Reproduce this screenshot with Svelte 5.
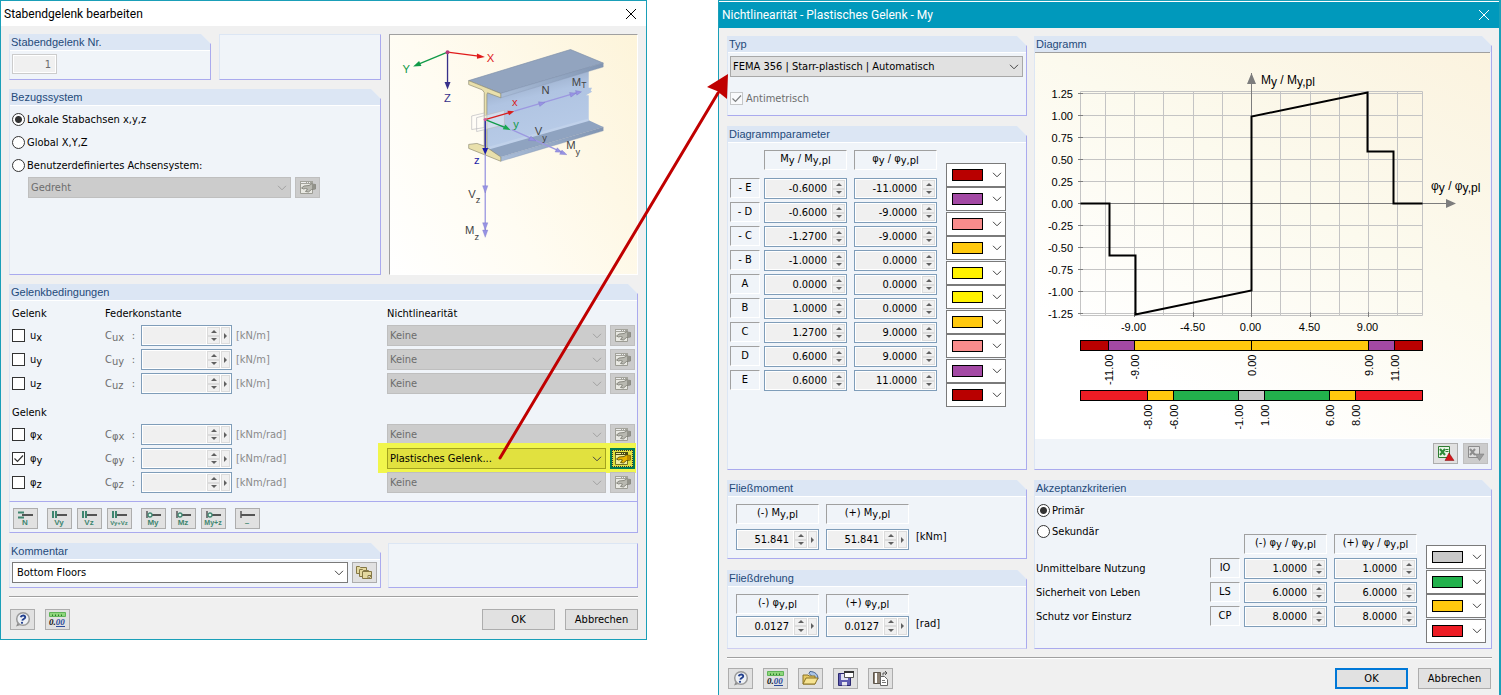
<script>
	let axes = $state("local")
	let criteria = $state("primary")
	let comment = $state("Bottom Floors")

	const springs = [
		{
			rows: [
				{ base: "u", axis: "x", unit: "[kN/m]" },
				{ base: "u", axis: "y", unit: "[kN/m]" },
				{ base: "u", axis: "z", unit: "[kN/m]" }
			]
		},
		{
			rows: [
				{ base: "φ", axis: "x", unit: "[kNm/rad]" },
				{ base: "φ", axis: "y", unit: "[kNm/rad]", on: true },
				{ base: "φ", axis: "z", unit: "[kNm/rad]" }
			]
		}
	]

	const presets = [["N"], ["Vy", "Vz", "Vy+Vz"], ["My", "Mz", "My+z"], ["–"]]

	const points = [
		["- E", "-0.6000", "-11.0000"],
		["- D", "-0.6000", "-9.0000"],
		["- C", "-1.2700", "-9.0000"],
		["- B", "-1.0000", "0.0000"],
		["A", "0.0000", "0.0000"],
		["B", "1.0000", "0.0000"],
		["C", "1.2700", "9.0000"],
		["D", "0.6000", "9.0000"],
		["E", "0.6000", "11.0000"]
	]
	const pointColors = ["#b90000", "#a349a4", "#f88c8c", "#ffc90e", "#fff200", "#fff200", "#ffc90e", "#f88c8c", "#a349a4", "#b90000"]

	const limits = [
		["Unmittelbare Nutzung", "IO", "1.0000"],
		["Sicherheit von Leben", "LS", "6.0000"],
		["Schutz vor Einsturz", "CP", "8.0000"]
	]
	const limitColors = ["#c8c8c8", "#22b14c", "#ffc90e", "#ed1c24"]

	// chart scales
	const px = v => 216.5 + Math.round(v * 13)
	const py = v => 150.5 - Math.round(v * 88)
	const xLines = [-11.25, -9, -6.75, -4.5, -2.25, 0, 2.25, 4.5, 6.75, 9, 11.25]
	const xTicks = [-9, -4.5, 0, 4.5, 9]
	const yTicks = [1.25, 1, 0.75, 0.5, 0.25, 0, -0.25, -0.5, -0.75, -1, -1.25]
	const curve = [[-13.15, 0], [-10.9, 0], [-10.9, -0.59], [-8.9, -0.59], [-8.9, -1.26], [0, -0.99], [0, 0.99], [8.9, 1.26], [8.9, 0.59], [10.9, 0.59], [10.9, 0], [13.15, 0]]
	const curvePoints = curve.map(([x, y]) => `${px(x)},${py(y)}`).join(" ")

	const bands = [
		{
			top: 287.5,
			stops: [-13.15, -11, -9, 0, 9, 11, 13.15],
			colors: ["#b90000", "#a349a4", "#ffc90e", "#ffc90e", "#a349a4", "#b90000"]
		},
		{
			top: 337.5,
			stops: [-13.15, -8, -6, -1, 1, 6, 8, 13.15],
			colors: ["#ed1c24", "#ffc90e", "#22b14c", "#c8c8c8", "#22b14c", "#ffc90e", "#ed1c24"]
		}
	]
</script>

{#snippet spin(value, label, more)}
	<span class="spin">
		<input type="text" {value} aria-label={label} readonly />
		<span class="arrows">
			<button type="button" aria-label="mehr"><svg width="6" height="3" viewBox="0 0 6 3"><path d="M3 0 6 3H0z" /></svg></button>
			<button type="button" aria-label="weniger"><svg width="6" height="3" viewBox="0 0 6 3"><path d="M0 0H6L3 3z" /></svg></button>
		</span>
		{#if more}
			<button type="button" class="more" aria-label="Auswahl"><svg width="3" height="6" viewBox="0 0 3 6"><path d="M0 0 3 3 0 6z" /></svg></button>
		{/if}
	</span>
{/snippet}

{#snippet colorSelect(color)}
	<span class="color">
		<select aria-label="Farbe"><option value={color}></option></select>
		<span class="swatch" style="background: {color}"></span>
	</span>
{/snippet}

{#snippet editIcon(active)}
	<svg class="icon" viewBox="0 0 17 15">
		<path d="M1.500 1.500h12v12h-12z" fill={active ? "#f3ee9c" : "#e9e9e3"} stroke={active ? "#77751f" : "#9c9c94"} />
		<path d="M1 1h13v3H1z" fill={active ? "#4b4a15" : "#a3a39b"} />
		<path d="M2 2.500h5m1 0h1m1 0h1" stroke={active ? "#f3ee9c" : "#eee"} />
		<path d="M2.500 8 5 6l5-.5 2.500-1.500 4 .500v4.500l-4 .500-3 2.500-3-.5 2-2.500-2-.5-2 .5z" fill={active ? "#e8b400" : "#b9b9b1"} stroke={active ? "#4a4200" : "#77776f"} stroke-width=".8" />
		<path d="M13 4.500h3.500v4.500H13z" fill={active ? "#b98a00" : "#93938b"} />
	</svg>
{/snippet}

{#snippet helpIcon()}
	<svg class="icon" viewBox="0 0 17 15">
		<path d="M4 10 2 14.500 8 12.500z" fill="#8c8c8c" />
		<circle cx="9" cy="7" r="6.300" fill="#eef1f6" stroke="#9a9a9a" stroke-width="1.500" />
		<path d="M6.700 5.200C7.200 3 11.500 2.800 11.200 5.300 11 7 8.600 7 8.300 8.600" fill="none" stroke="#23408e" stroke-width="1.900" />
		<circle cx="8" cy="10.800" r="1.100" fill="#23408e" />
	</svg>
{/snippet}

{#snippet unitsIcon()}
	<svg class="icon" viewBox="0 0 17 15">
		<path d="M.5.500h16v4H.5z" fill="#8ed67c" stroke="#5fb457" />
		<path d="M3.500 4V2.500m3 1.500V2.500m3 1.500V2.500m3 1.500V2.500" stroke="#2b7b28" />
		<text x="0" y="13" font-size="9" font-weight="bold" font-style="italic" font-family="Liberation Serif" fill="#111">0.<tspan fill="#2a4a9a">00</tspan></text>
		<path d="M7 14.500h9" stroke="#2a4a9a" />
	</svg>
{/snippet}

{#snippet presetIcon(name)}
	<svg class="icon" viewBox="0 0 17 15">
		{#if name === "N"}
			<path d="M1 1.500h6M1 6.500h6" stroke="#3f8670" stroke-width="2" />
			<path d="M5 4h11" stroke="#555" stroke-width="2" />
		{:else if name.startsWith("V")}
			<path d="M2 0v7M5 0v7" stroke="#3f8670" stroke-width="2" />
			<path d="M6 4h10" stroke="#555" stroke-width="2" />
		{:else if name.startsWith("M")}
			<path d="M2 0v7" stroke="#555" stroke-width="1.500" />
			<path d="M7 4h9" stroke="#555" stroke-width="2" />
			<circle cx="5" cy="4" r="2" fill="#dff2ea" stroke="#3f8670" stroke-width="1.300" />
		{:else}
			<path d="M2 0v7" stroke="#555" stroke-width="1.500" />
			<path d="M2 4h14" stroke="#555" stroke-width="2" />
		{/if}
		<text x="8" y="14" text-anchor="middle" font-size={name.length > 4 ? 6 : name.length > 2 ? 7 : 8} font-weight="bold" font-family="Liberation Sans" fill="#3f8670">{name}</text>
	</svg>
{/snippet}

{#snippet sheetsIcon()}
	<svg class="icon" viewBox="0 0 17 15" stroke="#857845" fill="#e4d9a0">
		<path d="M.5 1.500h3l1 1h6v6H.5z" />
		<path d="M3.500 4.500h3l1 1h5v6h-9z" />
		<path d="M6.500 6.500h9v7h-9z" />
		<path d="M12 13.500v-3h3.500z" fill="#fff" />
	</svg>
{/snippet}

<div class="page">
	<form class="dialog hinge">
		<header>
			<h1>Stabendgelenk bearbeiten</h1>
			<button type="button" class="close" aria-label="Schließen">
				<svg width="10" height="10" viewBox="0 0 10 10"><path d="M0 0 10 10M10 0 0 10" /></svg>
			</button>
		</header>

		<div class="content">
			<div class="upper">
				<section class="panel number">
					<h2><label for="hinge-no">Stabendgelenk Nr.</label></h2>
					<input id="hinge-no" type="text" value="1" disabled />
				</section>
				<section class="panel blank"></section>
				<section class="panel system">
					<h2>Bezugssystem</h2>
					<label class="choice"><input type="radio" bind:group={axes} value="local" />Lokale Stabachsen x,y,z</label>
					<label class="choice"><input type="radio" bind:group={axes} value="global" />Global X,Y,Z</label>
					<label class="choice"><input type="radio" bind:group={axes} value="user" />Benutzerdefiniertes Achsensystem:</label>
					<div class="rotated">
						<select class="off" aria-label="Achsensystem" disabled><option>Gedreht</option></select>
						<button type="button" class="tool" aria-label="Bearbeiten" disabled>{@render editIcon()}</button>
					</div>
				</section>
				<figure>
					<svg viewBox="27 15 747 717" role="img" aria-label="Stabachsen und Schnittgrößen">
						<defs>
							<linearGradient id="web" x1="0" y1="0" x2=".3" y2="1">
								<stop offset="0" stop-color="#8496b1" />
								<stop offset=".45" stop-color="#b0c4e2" />
								<stop offset="1" stop-color="#b9cce8" />
							</linearGradient>
							<linearGradient id="side" x1="0" y1="0" x2="1" y2="0">
								<stop offset="0" stop-color="#aabdd8" />
								<stop offset="1" stop-color="#8195b2" />
							</linearGradient>
						</defs>
						<path d="M318 182 628 108V172H638L634 180 638 184 620 194H628V272L318 360z" fill="url(#web)" />
						<path d="M318 358 628 270 672 290 362 381z" fill="#8fa3c0" />
						<path d="M318 352 628 265V272L318 361z" fill="#c0d1ea" />
						<path d="M362 381 672 290V302L362 394z" fill="url(#side)" stroke="#8395ae" />
						<path d="M265 150 573 56 672 97 362 189z" fill="#92a4bf" stroke="#7f90a9" stroke-width="2" />
						<path d="M362 189 672 97V109L362 202z" fill="url(#side)" stroke="#8395ae" />
						<path d="M265 150 362 189V202L322 187 320 192V352L362 381V394L265 355V343L290 340 312 348V186L306 178 265 162z" fill="#e9e0ac" stroke="#8b8870" stroke-width="2" />
						<path d="M274 257 312 248V292L274 298zM289 262 373 240V284L289 304z" fill="#fff" fill-opacity=".4" stroke="#b9b9bd" stroke-width="2" />

						<g stroke-width="4">
							<path d="M201 64 295 76" stroke="#e01a1a" /><path d="M314 79 290 68V84z" fill="#e01a1a" />
							<path d="M201 64 117 99" stroke="#109a48" /><path d="M97 107 115 91 122 106z" fill="#109a48" />
							<path d="M201 64V158" stroke="#37308a" /><path d="M201 177 192 154H210z" fill="#37308a" />
							<circle cx="201" cy="64" r="6" fill="#b23a7a" />
							<path d="M403 242 600 184M395 298 555 370M315 372V615" stroke="#9c98e0" />
							<path d="M315 268 388 247" stroke="#d81e1e" /><path d="M403 243 382 241 387 255z" fill="#d81e1e" />
							<path d="M315 268 378 293" stroke="#109a48" /><path d="M392 300 368 297 376 283z" fill="#18a850" />
							<path d="M315 268V358" stroke="#1c1ca8" /><path d="M315 374 306 354H324z" fill="#1c1ca8" />
							<circle cx="315" cy="268" r="5" fill="#d0589c" />
						</g>
						<g fill="#9793e4" stroke="#7773c2">
							<path d="M496 216 476 214 480 228zM590 188 570 186 574 200zM606 184 588 180 592 194z" />
							<path d="M468 332 446 331 453 318zM546 367 526 366 533 353zM562 374 540 373 547 360z" />
							<path d="M315 490 307 468H323zM315 602 307 580H323zM315 624 307 602H323z" />
						</g>

						<g font-size="34">
							<text x="320" y="95" fill="#e01a1a">X</text>
							<text x="65" y="127" fill="#109a48">Y</text>
							<text x="190" y="216" fill="#37308a">Z</text>
							<g fill="#444">
								<text x="485" y="192">N</text>
								<text x="577" y="166">M<tspan font-size="26" dy="6">T</tspan></text>
								<text x="465" y="315">V<tspan font-size="28" dy="18">y</tspan></text>
								<text x="560" y="356">M<tspan font-size="28" dy="18">y</tspan></text>
								<text x="264" y="504">V<tspan font-size="28" dy="16">z</tspan></text>
								<text x="254" y="614">M<tspan font-size="28" dy="18">z</tspan></text>
							</g>
							<text x="396" y="226" fill="#d81e1e">x</text>
							<text x="400" y="292" fill="#109a48">y</text>
							<text x="281" y="403" fill="#1c1ca8">z</text>
						</g>
					</svg>
				</figure>
			</div>

			<section class="panel springs">
				<h2>Gelenkbedingungen</h2>
				{#each springs as group, g}
					<div class="row caption" class:second={g > 0}>
						<span>Gelenk</span>
						{#if g === 0}
							<span class="wide">Federkonstante</span>
							<span class="nonlin">Nichtlinearität</span>
						{/if}
					</div>
					{#each group.rows as r}
						<div class="row">
							<label class="tick"><input type="checkbox" checked={r.on} /><span>{r.base}<sub>{r.axis}</sub></span></label>
							<span class="const"><span>C<sub>{r.base}{r.axis}</sub></span><span>:</span></span>
							{@render spin("", `C ${r.base}${r.axis}`, true)}
							<span class="unit">{r.unit}</span>
							<div class="law" class:marked={r.on}>
								<select class:off={!r.on} disabled={!r.on} aria-label="Nichtlinearität {r.base}{r.axis}">
									<option>{r.on ? "Plastisches Gelenk..." : "Keine"}</option>
								</select>
								<button type="button" class="tool" aria-label="Bearbeiten" disabled={!r.on}>{@render editIcon(r.on)}</button>
							</div>
						</div>
					{/each}
				{/each}
			</section>
			<div class="panel presets">
				{#each presets as group}
					<div>
						{#each group as name}
							<button type="button" class="tool" aria-label={name}>{@render presetIcon(name)}</button>
						{/each}
					</div>
				{/each}
			</div>

			<div class="lower">
				<section class="panel comment">
					<h2><label for="comment">Kommentar</label></h2>
					<div>
						<select id="comment" class="white" bind:value={comment}><option>Bottom Floors</option></select>
						<button type="button" class="tool" aria-label="Kommentare">{@render sheetsIcon()}</button>
					</div>
				</section>
				<section class="panel blank"></section>
			</div>

			<footer>
				<button type="button" class="tool" aria-label="Hilfe">{@render helpIcon()}</button>
				<button type="button" class="tool" aria-label="Einheiten">{@render unitsIcon()}</button>
				<button type="button" class="push first">OK</button>
				<button type="button" class="push">Abbrechen</button>
			</footer>
		</div>
	</form>

	<form class="dialog nonlinear">
		<header>
			<h1>Nichtlinearität - Plastisches Gelenk - My</h1>
			<button type="button" class="close" aria-label="Schließen">
				<svg width="10" height="10" viewBox="0 0 10 10"><path d="M0 0 10 10M10 0 0 10" /></svg>
			</button>
		</header>

		<div class="content">
			<div class="columns">
				<div class="stack">
					<section class="panel type">
						<h2><label for="type">Typ</label></h2>
						<select id="type"><option>FEMA 356 | Starr-plastisch | Automatisch</option></select>
						<label class="tick"><input type="checkbox" checked disabled />Antimetrisch</label>
					</section>

					<section class="panel params">
						<h2>Diagrammparameter</h2>
						<div class="fields">
							<table>
								<thead>
									<tr>
										<td></td>
										<th><span class="sunken">M<sub>y</sub> / M<sub>y,pl</sub></span></th>
										<th><span class="sunken">φ<sub>y</sub> / φ<sub>y,pl</sub></span></th>
									</tr>
								</thead>
								<tbody>
									{#each points as [name, m, phi]}
										<tr>
											<th class="code"><span class="sunken name">{name}</span></th>
											<td>{@render spin(m, `M ${name}`)}</td>
											<td>{@render spin(phi, `φ ${name}`)}</td>
										</tr>
									{/each}
								</tbody>
							</table>
							<div class="colors">
								{#each pointColors as color}
									{@render colorSelect(color)}
								{/each}
							</div>
						</div>
					</section>
				</div>

				<section class="panel diagram">
					<h2>Diagramm</h2>
					<div class="chart">
						<svg viewBox="0 0 455 385" role="img" aria-label="Diagramm">
							<g stroke="#c4c4c4" fill="none">
								<path d="M45.500 38.500H387.500V262.500H45.500z" />
								{#each xLines as v}
									<path d="M{px(v)} 38V262" />
								{/each}
								{#each yTicks as v}
									<path d="M45 {py(v)}H387" />
								{/each}
							</g>
							<g stroke="#7d7d7d">
								{#each yTicks as v}
									<path d="M43 {py(v)}H48" />
								{/each}
								{#each xTicks as v}
									<path d="M{px(v)} 259V264" />
								{/each}
								<path d="M216.500 20V262M45 150.500H412" />
							</g>
							<path d="M216.500 20 221 31H212zM421 150.500 411 146V155z" fill="#7d7d7d" />
							<polyline points={curvePoints} fill="none" stroke="#000" stroke-width="2" />

							<g text-anchor="end">
								{#each yTicks as v}
									<text x="38" y={py(v) + 4}>{v.toFixed(2)}</text>
								{/each}
							</g>
							<g text-anchor="middle">
								{#each xTicks as v}
									<text x={px(v) - 1} y="278">{v.toFixed(2)}</text>
								{/each}
							</g>
							<text class="axis" x="226" y="31">M<tspan dy="2">y</tspan> <tspan dy="-2">/ M</tspan><tspan dy="2">y,pl</tspan></text>
							<text class="axis" x="396" y="137">φ<tspan dy="2">y</tspan> <tspan dy="-2">/ φ</tspan><tspan dy="2">y,pl</tspan></text>

							{#each bands as band}
								{#each band.colors as color, i}
									<rect x={px(band.stops[i])} y={band.top} width={px(band.stops[i + 1]) - px(band.stops[i])} height="10" fill={color} stroke="#000" />
								{/each}
								{#each band.stops.slice(1, -1) as v}
									<text text-anchor="end" transform="translate({px(v) + 4} {band.top + 14}) rotate(-90)">{v.toFixed(2)}</text>
								{/each}
							{/each}
						</svg>
					</div>
					<div class="export">
						<button type="button" class="tool" aria-label="Excel-Export">
							<svg class="icon" viewBox="0 0 17 15">
								<path d="M1.500.500h11v11h-11z" fill="#e9f5e5" stroke="#2e7d32" />
								<path d="M3 3l5 6M8 3l-5 6" stroke="#2e8b3a" stroke-width="2" />
								<path d="M8.500 3.500h3m-3 2h3" stroke="#2e7d32" />
								<path d="M12 7 17 14.500H8z" fill="#d5151b" stroke="#7d0b0f" stroke-width=".5" />
							</svg>
						</button>
						<button type="button" class="tool" aria-label="Excel-Import" disabled>
							<svg class="icon" viewBox="0 0 17 15">
								<path d="M1.500.500h11v11h-11z" fill="#dedede" stroke="#8d8d8d" />
								<path d="M3 3l5 6M8 3l-5 6" stroke="#8d8d8d" stroke-width="2" />
								<path d="M8 8h9l-4.500 6.500z" fill="#9c9c9c" stroke="#777" stroke-width=".5" />
							</svg>
						</button>
					</div>
				</section>

				<div class="stack">
					<section class="panel yield">
						<h2>Fließmoment</h2>
						<div class="pair">
							<span class="sunken">(-) M<sub>y,pl</sub></span>
							<span class="sunken">(+) M<sub>y,pl</sub></span>
							<span></span>
							{@render spin("51.841", "(-) My,pl", true)}
							{@render spin("51.841", "(+) My,pl", true)}
							<span>[kNm]</span>
						</div>
					</section>
					<section class="panel yield">
						<h2>Fließdrehung</h2>
						<div class="pair tight">
							<span class="sunken">(-) φ<sub>y,pl</sub></span>
							<span class="sunken">(+) φ<sub>y,pl</sub></span>
							<span></span>
							{@render spin("0.0127", "(-) φy,pl", true)}
							{@render spin("0.0127", "(+) φy,pl", true)}
							<span>[rad]</span>
						</div>
					</section>
				</div>

				<section class="panel acceptance">
					<h2>Akzeptanzkriterien</h2>
					<label class="choice"><input type="radio" bind:group={criteria} value="primary" />Primär</label>
					<label class="choice"><input type="radio" bind:group={criteria} value="secondary" />Sekundär</label>
					<div class="fields">
						<table>
							<thead>
								<tr>
									<td></td>
									<td></td>
									<th><span class="sunken">(-) φ<sub>y</sub> / φ<sub>y,pl</sub></span></th>
									<th><span class="sunken">(+) φ<sub>y</sub> / φ<sub>y,pl</sub></span></th>
								</tr>
							</thead>
							<tbody>
								{#each limits as [title, code, value]}
									<tr>
										<th class="title">{title}</th>
										<td class="code"><span class="sunken name">{code}</span></td>
										<td>{@render spin(value, `${code} (-)`)}</td>
										<td>{@render spin(value, `${code} (+)`)}</td>
									</tr>
								{/each}
							</tbody>
						</table>
						<div class="colors">
							{#each limitColors as color}
								{@render colorSelect(color)}
							{/each}
						</div>
					</div>
				</section>
			</div>

			<footer>
				<button type="button" class="tool" aria-label="Hilfe">{@render helpIcon()}</button>
				<button type="button" class="tool" aria-label="Einheiten">{@render unitsIcon()}</button>
				<button type="button" class="tool" aria-label="Öffnen">
					<svg class="icon" viewBox="0 0 17 15">
						<path d="M8 .5c5 0 8 3 8 7l-2 2-7-7z" fill="#a9c3e6" stroke="#27477c" stroke-width=".8" />
						<path d="M1 4h5l1 1h6v8H1z" fill="#e6c964" stroke="#8c7426" />
						<path d="M1 13 4 7h12l-3 6z" fill="#f6e391" stroke="#8c7426" />
					</svg>
				</button>
				<button type="button" class="tool" aria-label="Speichern">
					<svg class="icon" viewBox="0 0 17 15">
						<path d="M1.500 2.500h12v12h-12z" fill="#5f5cb0" stroke="#2b2870" />
						<path d="M4 3h7v6H4z" fill="#dfe0f2" />
						<path d="M5 11h5v3.500H5z" fill="#e8e8ee" />
						<path d="M7.500.500h9v6h-9z" fill="#fff" stroke="#555" />
						<path d="M7 1h10" stroke="#333" stroke-width="2" />
					</svg>
				</button>
				<button type="button" class="tool" aria-label="Kopieren">
					<svg class="icon" viewBox="0 0 17 15">
						<path d="M1.500 1.500h7v11h-7z" fill="#8b8072" stroke="#5e574d" />
						<path d="M4 2v10" stroke="#fff" stroke-width="2" />
						<path d="M11 4.500V2h4M13 0l2 2-2 2" fill="none" stroke="#555" />
						<path d="M8.500 5.500h4l3 3v6h-7z" fill="#fff" stroke="#666" />
						<path d="M10 9.500h3m-3 2h4" stroke="#777" />
					</svg>
				</button>
				<button type="button" class="push first default">OK</button>
				<button type="button" class="push">Abbrechen</button>
			</footer>
		</div>
	</form>

	<svg class="pointer" width="234" height="392" viewBox="0 0 234 392">
		<path d="M4 386 222 21" stroke="#c00000" stroke-width="3" stroke-linecap="round" />
		<path d="M232 2 211 15 221 19 231 27z" fill="#c00000" />
	</svg>
</div>

<style>
:global(body) {
	margin: 0;
	background: #fff;
	overflow: hidden;
}
.page {
	position: relative;
	display: grid;
	grid-template-columns: 647fr 783fr;
	gap: 71px;
	align-items: start;
	min-height: 100vh;
	font: 11px/15px "DejaVu Sans Condensed", "Noto Sans", sans-serif;
	color: #000;
}
.page * {
	box-sizing: border-box;
}
input, select, button {
	margin: 0;
	font: inherit;
	color: inherit;
}
sub {
	font-size: 11px;
	line-height: 0;
	vertical-align: -2px;
}
h1, h2 {
	margin: 0;
	font-weight: normal;
}

.dialog {
	border: 1px solid #1a9fb8;
	background: #f0f0f0;
}
.nonlinear {
	min-height: 100vh;
	border-right-width: 2px;
	border-bottom: 0;
}
.dialog > header {
	display: flex;
	align-items: center;
	justify-content: space-between;
	height: 25px;
	padding: 0 10px 0 3px;
	background: #fff;
}
.nonlinear > header {
	height: 27px;
	border-top: 1px solid #fff;
	background: #0099bc;
	color: #fff;
}
h1 {
	font: 12px/16px Roboto, "Open Sans", sans-serif;
}
.close {
	display: flex;
	padding: 0;
	border: 0;
	background: none;
}
.close path {
	stroke: currentColor;
}
.content {
	padding: 8px;
}
.nonlinear .content {
	padding-right: 7px;
}

.panel {
	border: solid #aaaaee;
	border-width: 0 1px 1px 0;
	border-left: 1px solid #dce6f4;
	background: #f0f4f9;
	clip-path: polygon(0 0, calc(100% - 10px) 0, 100% 10px, 100% 100%, 0 100%);
}
.panel.blank {
	border-top: 1px solid #dce6f4;
	clip-path: none;
}
h2 {
	height: 17px;
	padding-left: 1px;
	border-bottom: 1px solid #fff;
	background: #dce6f4;
	color: #1f4a7a;
	font: 11px/16px "Liberation Sans", sans-serif;
}

.upper {
	display: grid;
	grid-template-columns: 202px 162px 1fr;
	grid-template-rows: 46px 186px;
	gap: 9px 8px;
}
.system {
	grid-column: span 2;
}
figure {
	grid-column: 3;
	grid-row: 1 / 3;
	margin: 0;
	border: 1px solid #a0a0a0;
	border-right-color: #fff;
	border-bottom-color: #fff;
	background: linear-gradient(60deg, #fff, #fffcf2 40%, #fdf4da);
}
figure svg {
	display: block;
	width: 100%;
	height: 100%;
	font-family: "Liberation Sans", sans-serif;
}
.number input {
	width: 45px;
	height: 20px;
	margin: 3px 2px;
	padding: 0 5px;
	border: 1px solid #ccc;
	box-shadow: inset 0 0 0 1px #fff;
	background: #f0f0f0;
	color: #6d6d6d;
	text-align: right;
}
.choice {
	display: flex;
	align-items: center;
	gap: 2px;
	height: 15px;
	margin: 0 0 8px 2px;
}
.system h2, .acceptance h2 {
	margin-bottom: 6px;
}
input[type="radio"], input[type="checkbox"] {
	appearance: none;
	width: 13px;
	height: 13px;
	border: 1px solid #333;
	background: #fff;
}
input[type="radio"] {
	border-radius: 50%;
}
input[type="radio"]:checked {
	background: radial-gradient(circle, #333 3px, #fff 4px);
}
input[type="checkbox"]:checked {
	background: #fff url("data:image/svg+xml,%3Csvg xmlns='http://www.w3.org/2000/svg' width='11' height='11'%3E%3Cpath d='M1.500 5.500 4.500 8.500 10 2.500' fill='none' stroke='%23333' stroke-width='1.200'/%3E%3C/svg%3E");
}
input[type="checkbox"]:disabled {
	border-color: #aaa;
	opacity: .6;
}

select {
	appearance: none;
	width: 100%;
	height: 21px;
	padding: 0 20px 0 2px;
	border: 1px solid #a8a8a8;
	border-radius: 0;
	background: #e1e1e1 url("data:image/svg+xml,%3Csvg xmlns='http://www.w3.org/2000/svg' width='10' height='6'%3E%3Cpath d='M1 .8 5 4.800 9 .8' fill='none' stroke='%23444'/%3E%3C/svg%3E") no-repeat right 3px center;
}
select.off {
	border-color: #bfbfbf;
	background-color: #ccc;
	background-image: url("data:image/svg+xml,%3Csvg xmlns='http://www.w3.org/2000/svg' width='10' height='6'%3E%3Cpath d='M1 .8 5 4.800 9 .8' fill='none' stroke='%23a0a0a0'/%3E%3C/svg%3E");
	color: #6d6d6d;
	opacity: 1;
}
select.white {
	padding-left: 4px;
	border-color: #7a7a7a;
	background-color: #fff;
}
.tool {
	display: flex;
	flex: none;
	align-items: center;
	justify-content: center;
	width: 25px;
	height: 21px;
	padding: 0;
	border: 1px solid #adadad;
	background: #e1e1e1;
}
.tool:disabled {
	border-color: #bfbfbf;
	background: #ccc;
}
.icon {
	flex: none;
	width: 17px;
	height: 15px;
	overflow: visible;
}
.rotated {
	display: grid;
	grid-template-columns: 263px 25px;
	gap: 4px;
	margin: -4px 0 0 18px;
}

.springs {
	height: 218px;
	margin-top: 9px;
}
.row {
	display: grid;
	grid-template-columns: 93px 36px 91px 155px 1fr;
	align-items: center;
	height: 21px;
	margin: 0 2px 3px 2px;
}
.caption {
	height: 24px;
	margin-bottom: 0;
}
.second {
	height: 27px;
	padding-top: 4px;
}
.wide {
	grid-column: 2 / 5;
}
.tick {
	display: flex;
	align-items: center;
	gap: 5px;
}
.const {
	display: flex;
	justify-content: space-between;
	padding-right: 6px;
	color: #6d6d6d;
}
.unit {
	padding-left: 4px;
	color: #8a8a8a;
}
.law {
	display: flex;
	gap: 4px;
}
.law.marked {
	margin: -5px -1px -4px -9px;
	padding: 5px 1px 4px 9px;
	background: #f1f64c;
}
.marked select {
	border-color: #a3a31e;
	background-color: #e1e13f;
}
.marked .tool {
	border: 2px solid #007a55;
	outline: 1px dotted #333;
	outline-offset: -3px;
	background: #e1e13f;
}

.spin {
	display: flex;
	gap: 1px;
	height: 21px;
	padding: 1px;
	border: 1px solid #7f9db9;
	background: #fff;
}
.spin input {
	flex: 1;
	min-width: 0;
	padding: 0 4px 0 0;
	border: 0;
	background: #f0f0f0;
	text-align: right;
}
.arrows {
	display: grid;
	grid-template-rows: 1fr 1fr;
	width: 13px;
}
.spin button {
	display: flex;
	align-items: center;
	justify-content: center;
	min-height: 0;
	padding: 0;
	border: 1px solid #dcdcdc;
	background: #f0f0f0;
}
.spin .more {
	width: 9px;
}
.spin svg {
	fill: #606060;
}

.presets {
	display: flex;
	gap: 9px;
	height: 31px;
	padding: 6px 3px;
	clip-path: none;
}
.presets div {
	display: flex;
	gap: 5px;
}
.lower {
	display: grid;
	grid-template-columns: 372px 1fr;
	gap: 7px;
	height: 45px;
	margin-top: 10px;
}
.comment div {
	display: flex;
	gap: 4px;
	padding: 2px 3px 0 2px;
}
footer {
	display: flex;
	gap: 10px;
	margin-top: 8px;
	padding: 12px 0 1px 1px;
	border-top: 1px solid #a0a0a0;
	box-shadow: inset 0 1px #fff;
}
.nonlinear footer {
	padding: 10px 1px 1px;
}
.push {
	width: 73px;
	height: 21px;
	padding: 0;
	border: 1px solid #adadad;
	background: #e1e1e1;
}
.push.first {
	margin-left: auto;
}
.push.default {
	border: 2px solid #0078d7;
}

.columns {
	display: grid;
	grid-template-columns: 300px 1fr;
	gap: 10px 7px;
}
.stack {
	display: grid;
	gap: 10px;
}
.type {
	height: 80px;
}
.type select {
	width: 293px;
	margin: 3px 2px 14px;
}
.type .tick {
	gap: 3px;
	margin-left: 2px;
	color: #6d6d6d;
}
.params {
	height: 344px;
}
.fields {
	display: flex;
	justify-content: space-between;
	align-items: flex-start;
}
table {
	border-collapse: collapse;
}
th, td {
	padding: 0 7px 3px 0;
	font-weight: normal;
	vertical-align: top;
}
.code {
	padding-right: 4px;
}
.sunken {
	display: block;
	width: 83px;
	height: 20px;
	border: 1px solid #fff;
	border-top-color: #a0a0a0;
	border-left-color: #a0a0a0;
	text-align: center;
	white-space: nowrap;
}
.sunken.name {
	width: 30px;
	line-height: 18px;
}
td .spin {
	width: 83px;
}
thead th {
	padding-bottom: 8px;
}
.params .fields {
	padding: 7px 20px 0 2px;
}
.colors {
	display: grid;
	flex: none;
	grid-auto-rows: 24px 25px;
	width: 60px;
	padding-top: 13px;
}
.color {
	position: relative;
	height: 24px;
}
.color select {
	height: 24px;
	border-color: #7a7a7a;
	background-color: #fff;
}
.swatch {
	position: absolute;
	top: 6px;
	left: 6px;
	width: 31px;
	height: 12px;
	border: 1px solid #000;
	pointer-events: none;
}

.diagram {
	display: flex;
	flex-direction: column;
}
.chart {
	margin-right: 1px;
	border: solid #a0a0a0;
	border-width: 1px 0 0;
	border-bottom: 1px solid #fff;
	background: linear-gradient(30deg, #fff 20%, #fcfaee 60%, #fbf3df);
}
.diagram h2 {
	height: 16px;
	border: 0;
}
.chart svg {
	display: block;
	width: 100%;
	font: 11px "Liberation Sans", sans-serif;
}
.axis {
	font-size: 12px;
}
.export {
	display: flex;
	justify-content: flex-end;
	gap: 5px;
	padding: 4px 3px 0 0;
}

.yield {
	height: 79px;
}
.pair {
	display: grid;
	grid-template-columns: 83px 83px auto;
	gap: 5px 7px;
	padding: 7px 8px;
}
.tight {
	row-gap: 2px;
}
.acceptance {
	height: 169px;
}
.acceptance .choice {
	margin-bottom: 6px;
}
.acceptance .fields {
	gap: 2px;
	margin-top: -11px;
	padding: 0 5px 0 1px;
}
.acceptance table {
	flex: 1;
}
.acceptance thead th {
	padding-bottom: 4px;
}
.acceptance .title {
	width: 100%;
	text-align: left;
	vertical-align: middle;
}
.acceptance .colors {
	grid-auto-rows: 25px 24px;
	padding-top: 11px;
}

.pointer {
	position: absolute;
	top: 72px;
	left: 496px;
	pointer-events: none;
}
</style>
